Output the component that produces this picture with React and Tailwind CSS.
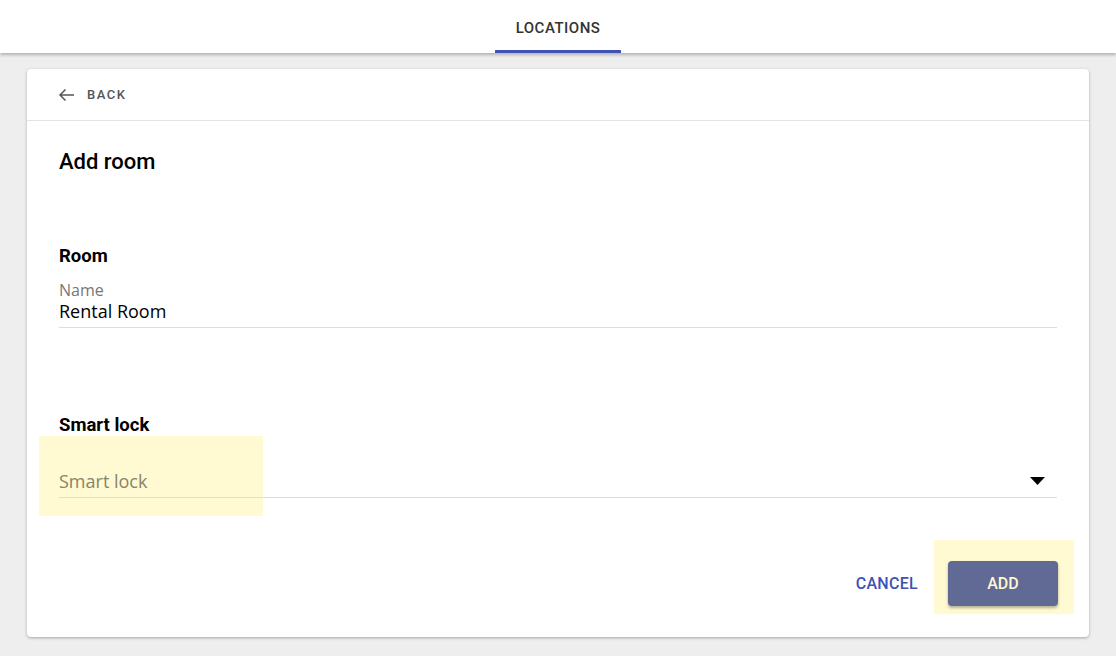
import React from "react";

export default function App() {
  return (
    <div className="min-h-[656px] bg-[#eeeeee] font-['Roboto',sans-serif]">
      {/* top tabs */}
      <div className="h-[53px] bg-white shadow-[0_2px_3px_rgba(0,0,0,0.25)] flex justify-center relative z-10">
        <div className="w-[126px] h-[53px] flex items-center justify-center border-b-[3px] border-[#3f51b5] pt-[6px]">
          <span className="text-[15px] font-medium tracking-[0.5px] text-[#333333]">LOCATIONS</span>
        </div>
      </div>

      <div className="px-[27px] pt-[16px] pb-[18px]">
        <div className="bg-white rounded-[4px] shadow-[0_1px_3px_rgba(0,0,0,0.3)]">
          {/* back */}
          <div className="h-[52px] border-b border-[#e3e3e3] flex items-center pl-[31px] gap-[12px]">
            <svg width="17" height="14" viewBox="0 0 17 14" fill="none" stroke="#555" strokeWidth="1.5">
              <path d="M16 7H2M7.5 1.5L2 7l5.5 5.5" />
            </svg>
            <span className="text-[13px] font-medium tracking-[1.5px] text-[#555555]">BACK</span>
          </div>

          <div className="pl-[32px] pr-[32px] pt-[27px] pb-[23px]">
            <h1 className="text-[22px] font-medium text-black leading-[28px]">Add room</h1>

            <h2 className="mt-[68px] text-[18.5px] font-bold text-black leading-[24px]">Room</h2>
            <div className="mt-[12px] border-b border-[#dddddd] pb-[5px] font-['Open_Sans',sans-serif]">
              <div className="text-[16px] text-[#777777] leading-[20px]">Name</div>
              <div className="text-[18px] text-black leading-[22px]">Rental Room</div>
            </div>

            <h2 className="mt-[85px] text-[18.5px] font-bold text-black leading-[24px]">Smart lock</h2>
            <div className="relative">
              <div className="absolute left-[-20px] top-[-1px] w-[224px] h-[80px] bg-[#fffad2]"></div>
              <div className="relative h-[61px] border-b border-[#dddddd] flex items-end justify-between pb-[4px]">
                <span className="font-['Open_Sans',sans-serif] text-[18px] text-[#888469] leading-[24px]">Smart lock</span>
                <svg width="15" height="8" viewBox="0 0 15 8" className="mr-[12px] mb-[8px]">
                  <path d="M0 0h15L7.5 8z" fill="#000" />
                </svg>
              </div>
            </div>

            <div className="mt-[42px] flex justify-end items-start -mr-[17px]">
              <button className="mt-[21px] h-[45px] px-[8px] mr-[8px] text-[16px] font-medium tracking-[0.3px] text-[#3f51b5]">CANCEL</button>
              <div className="bg-[#fffad2] pl-[14px] pr-[16px] pt-[21px] pb-[8px]">
                <button className="w-[110px] h-[45px] rounded-[4px] bg-[#616a94] text-[#fff8d0] text-[16px] font-medium shadow-[0_2px_3px_rgba(0,0,0,0.3)]">ADD</button>
              </div>
            </div>
          </div>
        </div>
      </div>
    </div>
  );
}
